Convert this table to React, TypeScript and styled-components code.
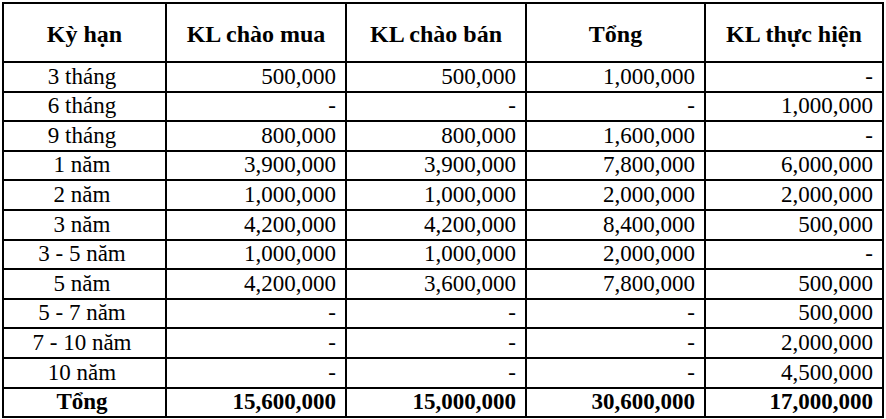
import React from 'react';
import styled, { createGlobalStyle } from 'styled-components';

const SERIF = '"Liberation Serif", "Times New Roman", serif';

const GlobalStyle = createGlobalStyle`
  html, body {
    margin: 0;
    padding: 0;
    background: #ffffff;
  }
  body, table, th, td {
    font-family: ${SERIF};
    color: #000000;
  }
`;

interface Row {
  term: string;
  buy: string;
  sell: string;
  total: string;
  done: string;
};

const ROWS: Row[] = [
  { term: '3 tháng', buy: '500,000', sell: '500,000', total: '1,000,000', done: '-' },
  { term: '6 tháng', buy: '-', sell: '-', total: '-', done: '1,000,000' },
  { term: '9 tháng', buy: '800,000', sell: '800,000', total: '1,600,000', done: '-' },
  { term: '1 năm', buy: '3,900,000', sell: '3,900,000', total: '7,800,000', done: '6,000,000' },
  { term: '2 năm', buy: '1,000,000', sell: '1,000,000', total: '2,000,000', done: '2,000,000' },
  { term: '3 năm', buy: '4,200,000', sell: '4,200,000', total: '8,400,000', done: '500,000' },
  { term: '3 - 5 năm', buy: '1,000,000', sell: '1,000,000', total: '2,000,000', done: '-' },
  { term: '5 năm', buy: '4,200,000', sell: '3,600,000', total: '7,800,000', done: '500,000' },
  { term: '5 - 7 năm', buy: '-', sell: '-', total: '-', done: '500,000' },
  { term: '7 - 10 năm', buy: '-', sell: '-', total: '-', done: '2,000,000' },
  { term: '10 năm', buy: '-', sell: '-', total: '-', done: '4,500,000' },
];

const TOTAL: Row = {
  term: 'Tổng',
  buy: '15,600,000',
  sell: '15,000,000',
  total: '30,600,000',
  done: '17,000,000',
};

const WIDTHS = [163, 180, 180, 179, 178];

export default function App() {
  return (
    <>
      <GlobalStyle />
      <Table>
        <colgroup>
          {WIDTHS.map((w, i) => (
            <col key={i} style={{ width: w }} />
          ))}
        </colgroup>
        <thead>
          <HeadRow>
            <HeadCell>Kỳ hạn</HeadCell>
            <HeadCell>KL chào mua</HeadCell>
            <HeadCell>KL chào bán</HeadCell>
            <HeadCell>Tổng</HeadCell>
            <HeadCell>KL thực hiện</HeadCell>
          </HeadRow>
        </thead>
        <tbody>
          {ROWS.map((r) => (
            <BodyRow key={r.term}>
              <TermCell>{r.term}</TermCell>
              <NumCell>{r.buy}</NumCell>
              <NumCell>{r.sell}</NumCell>
              <NumCell>{r.total}</NumCell>
              <NumCell>{r.done}</NumCell>
            </BodyRow>
          ))}
          <BodyRow>
            <TermCell $bold>{TOTAL.term}</TermCell>
            <NumCell $bold>{TOTAL.buy}</NumCell>
            <NumCell $bold>{TOTAL.sell}</NumCell>
            <NumCell $bold>{TOTAL.total}</NumCell>
            <NumCell $bold>{TOTAL.done}</NumCell>
          </BodyRow>
        </tbody>
      </Table>
    </>
  );
}

const Table = styled.table`
  margin: 2px 0 0 2px;
  width: 882px;
  table-layout: fixed;
  border-collapse: separate;
  border-spacing: 0;
  border-top: 2px solid #000;
  border-left: 2px solid #000;

  font-family: ${SERIF};
  font-size: 23px;
  line-height: 1.15;
`;
const HeadRow = styled.tr`
  height: 59px;
`;
const BodyRow = styled.tr`
  height: 29.6px;
`;
const Cell = styled.td<{ $bold?: boolean }>`
  box-sizing: border-box;
  padding: 0 9px;
  border-right: 2px solid #000;
  border-bottom: 2px solid #000;
  vertical-align: middle;
  white-space: nowrap;
  font-family: ${SERIF};
  font-weight: ${(p) => (p.$bold ? 700 : 400)};
`;
const HeadCell = styled(Cell).attrs({ as: 'th' })`
  padding-top: 4px;
  text-align: center;
  font-size: 24px;
  font-weight: 700;
`;
const TermCell = styled(Cell)`
  padding-right: 14px;
  text-align: center;
`;
const NumCell = styled(Cell)`
  text-align: right;
`;
